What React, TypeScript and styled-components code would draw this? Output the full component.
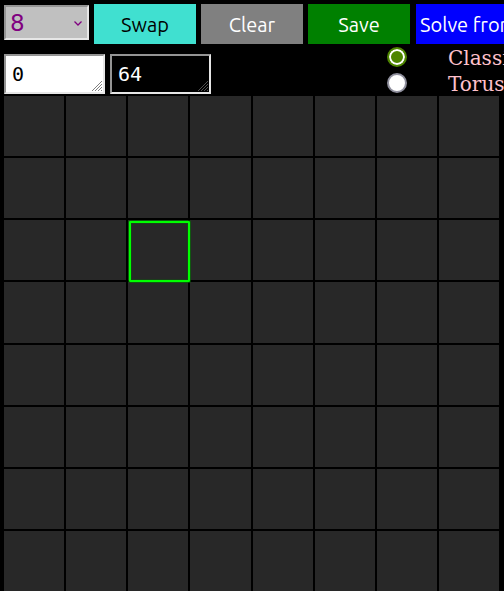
import React, { useState } from "react";
import styled, { createGlobalStyle } from "styled-components";

const GlobalStyle = createGlobalStyle`
  *, *::before, *::after { box-sizing: border-box; }
  body { margin: 0; background: #000; overflow-x: hidden; }
`;

const uiFont = `Ubuntu, "Noto Sans", sans-serif`;

const Page = styled.main`
  padding: 4px 4px 0;
  overflow: hidden;
`;

const Toolbar = styled.div`
  display: flex;
  align-items: flex-start;
  gap: 5px;
  height: 40px;
`;

const SizePicker = styled.div`
  position: relative;
  flex: none;
  width: 85px;
  margin-top: 1px;
`;

const SizeSelect = styled.select`
  appearance: none;
  display: block;
  width: 100%;
  height: 35px;
  margin: 0;
  padding: 0 4px;
  border: 2px solid;
  border-color: #949494 #e6e6e6 #e6e6e6 #949494;
  border-radius: 0;
  background: #c0c0c0;
  color: #800080;
  font: 23px "DejaVu Sans", sans-serif;
`;

const Chevron = styled.svg`
  position: absolute;
  right: 6px;
  top: 14px;
  width: 10px;
  height: 8px;
  pointer-events: none;
`;

const ActionButton = styled.button<{ $background: string; $color?: string }>`
  flex: none;
  min-width: 102px;
  height: 40px;
  margin: 0;
  padding: 0 4px;
  border: 0;
  background: ${(p) => p.$background};
  color: ${(p) => p.$color ?? "#fff"};
  font: 20px ${uiFont};
  white-space: nowrap;
`;

const SolveButton = styled(ActionButton)`
  margin-left: 1px;
`;

const OptionsRow = styled.div`
  display: flex;
  align-items: flex-start;
  gap: 5px;
  height: 52px;
`;

const NumberArea = styled.textarea<{ $dark?: boolean }>`
  flex: none;
  width: 101px;
  height: 40px;
  margin: 10px 0 0;
  padding: 6px;
  border: 2px solid;
  border-color: #949494 #e6e6e6 #e6e6e6 #949494;
  border-radius: 0;
  background: ${(p) => (p.$dark ? "#000" : "#fff")};
  color: ${(p) => (p.$dark ? "#fff" : "#000")};
  font: 20px/24px "DejaVu Sans Mono", monospace;
  overflow: hidden;
  resize: none;
`;

const AreaFrame = styled.div`
  position: relative;
  flex: none;
  height: 50px;
`;

const Grip = styled.svg`
  position: absolute;
  right: 3px;
  bottom: 3px;
  width: 10px;
  height: 10px;
  pointer-events: none;
`;

const ModeList = styled.div`
  flex: none;
  margin-left: 171px;
`;

const ModeLabel = styled.label`
  display: flex;
  align-items: center;
  gap: 41px;
  height: 26px;
  color: #ffc0cb;
  font: 20px "DejaVu Serif", serif;
  white-space: nowrap;
`;

const ModeText = styled.span`
  padding-top: 2px;
`;

const ModeRadio = styled.input`
  appearance: none;
  flex: none;
  width: 20px;
  height: 20px;
  margin: 0;
  border: 2px solid #8f8f9d;
  border-radius: 50%;
  background: #fff;

  &:checked {
    border-color: #4e8500;
    background: #4e8500;
    box-shadow: inset 0 0 0 2px #fff;
  }
`;

const Board = styled.div`
  display: grid;
  grid-template-columns: repeat(8, 1fr);
  grid-template-rows: repeat(8, 1fr);
  gap: 2px;
  margin-right: 1px;
  aspect-ratio: 1;
`;

const Cell = styled.button`
  position: relative;
  min-width: 0;
  margin: 0;
  padding: 0;
  border: 0;
  background: #282828;

  &[aria-pressed="true"]::after {
    content: "";
    position: absolute;
    z-index: 1;
    inset: 1px -2px -2px 1px;
    border: 2px solid #00ff00;
    border-radius: 1px;
    box-shadow: 0 0 0 1px rgba(0, 120, 0, 0.6), inset 0 0 0 1px rgba(0, 120, 0, 0.3);
  }
`;

const BOARD_SIZE = 8;
const cells = Array.from({ length: BOARD_SIZE * BOARD_SIZE }, (_, i) => i);

function NumberField({ label, value, dark }: { label: string; value: string; dark?: boolean }) {
  return (
    <AreaFrame>
      <NumberArea aria-label={label} defaultValue={value} $dark={dark} spellCheck={false} />
      <Grip viewBox="0 0 10 10" aria-hidden="true">
        <path
          d="M0 10 10 0M3 10 10 3M6 10 10 6M9 10 10 9"
          fill="none"
          stroke={dark ? "#505050" : "#808080"}
          strokeWidth="1"
        />
      </Grip>
    </AreaFrame>
  );
}

export default function App() {
  const [size, setSize] = useState("8");
  const [mode, setMode] = useState("classic");
  const [selected, setSelected] = useState(18);

  return (
    <>
      <GlobalStyle />
      <Page>
        <Toolbar>
          <SizePicker>
            <SizeSelect aria-label="Board size" value={size} onChange={(e) => setSize(e.target.value)}>
              <option value="8">8</option>
            </SizeSelect>
            <Chevron viewBox="0 0 10 8" aria-hidden="true">
              <path d="M1.5 2.5 5 6l3.5-3.5" fill="none" stroke="#800080" strokeWidth="1.3" />
            </Chevron>
          </SizePicker>
          <ActionButton $background="#40e0d0" $color="#000">Swap</ActionButton>
          <ActionButton $background="#808080">Clear</ActionButton>
          <ActionButton $background="#008000">Save</ActionButton>
          <SolveButton $background="#0000ff">Solve from</SolveButton>
        </Toolbar>
        <OptionsRow>
          <NumberField label="Count" value="0" />
          <NumberField label="Remaining" value="64" dark />
          <ModeList role="radiogroup" aria-label="Board type">
            <ModeLabel>
              <ModeRadio type="radio" name="mode" checked={mode === "classic"} onChange={() => setMode("classic")} />
              <ModeText>Classic</ModeText>
            </ModeLabel>
            <ModeLabel>
              <ModeRadio type="radio" name="mode" checked={mode === "torus"} onChange={() => setMode("torus")} />
              <ModeText>Torus</ModeText>
            </ModeLabel>
          </ModeList>
        </OptionsRow>
        <Board>
          {cells.map((i) => (
            <Cell
              key={i}
              type="button"
              aria-label={`Cell ${i + 1}`}
              aria-pressed={i === selected}
              onClick={() => setSelected(i)}
            />
          ))}
        </Board>
      </Page>
    </>
  );
}
